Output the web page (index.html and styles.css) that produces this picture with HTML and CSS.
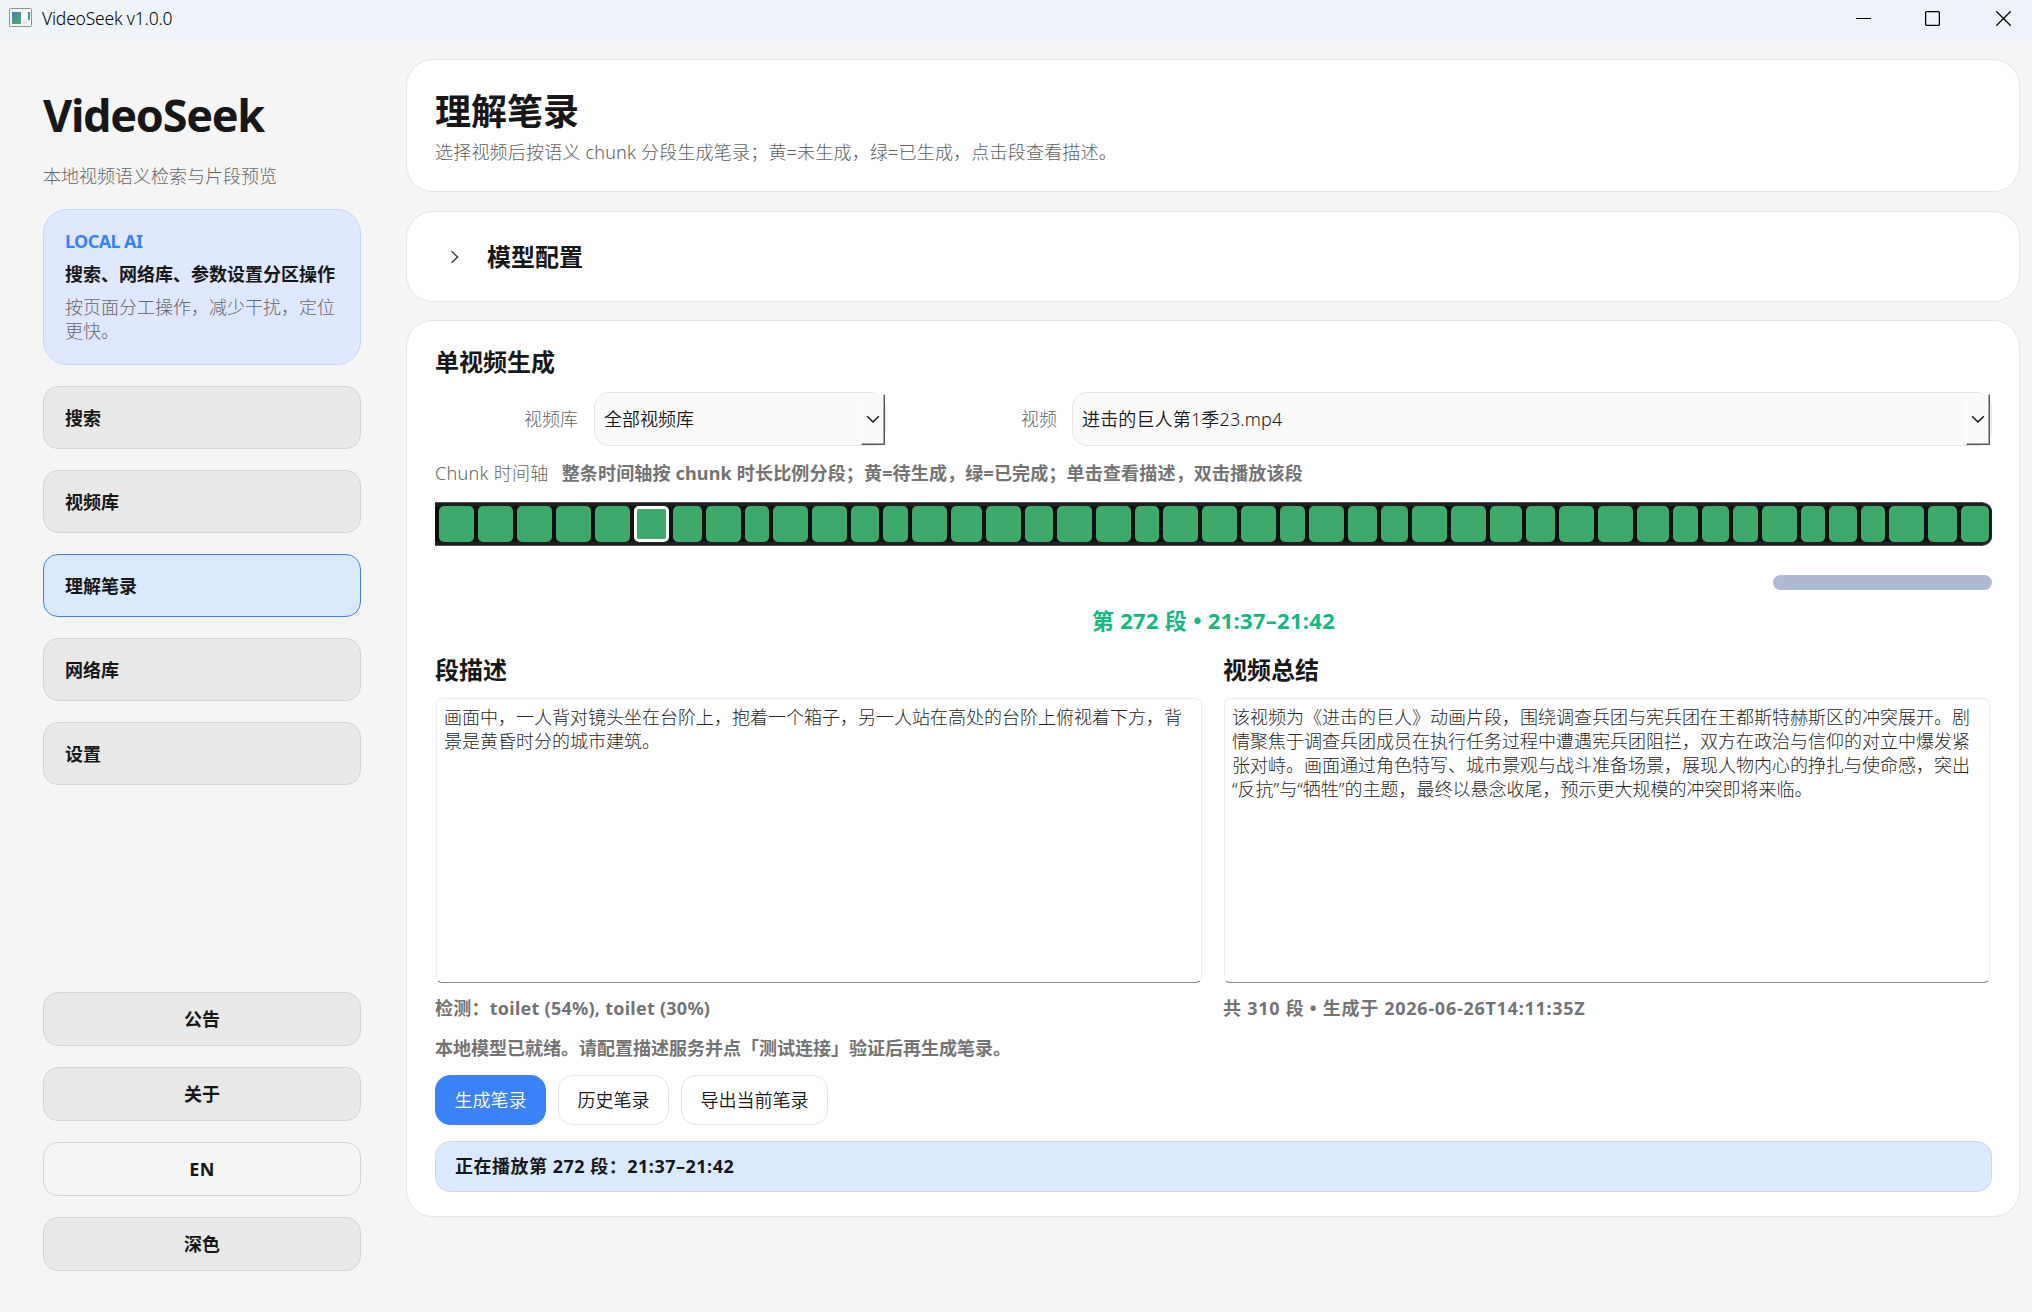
FILE: index.html
```html
<!DOCTYPE html>
<html lang="zh-CN">
<head>
<meta charset="utf-8">
<title>VideoSeek v1.0.0</title>
<link rel="stylesheet" href="styles.css">
</head>
<body>
<header class="titlebar">
  <svg class="app-icon" width="23" height="19" viewBox="0 0 23 19">
    <defs><linearGradient id="g" x1="0" y1="0" x2="0.6" y2="1"><stop offset="0" stop-color="#4a7fb0"/><stop offset="1" stop-color="#4fa878"/></linearGradient></defs>
    <rect x="0.5" y="0.5" width="22" height="18" rx="1" fill="#f4f4f4" stroke="#8f9296"/>
    <rect x="3" y="4" width="9" height="12" fill="url(#g)"/>
    <rect x="14" y="4" width="4" height="7" fill="#fff"/>
    <rect x="14" y="12" width="4" height="4" fill="#e6e6e6"/>
    <rect x="19" y="4" width="2" height="8" fill="url(#g)"/>
  </svg>
  <span class="app-title">VideoSeek v1.0.0</span>
  <div class="win-controls">
    <svg width="15" height="15" viewBox="0 0 15 15"><path d="M0 7.5H15" stroke="#000" fill="none"/></svg>
    <svg width="15" height="15" viewBox="0 0 15 15"><rect x="0.6" y="0.6" width="13.8" height="13.8" rx="1.2" stroke="#000" stroke-width="1.3" fill="none"/></svg>
    <svg width="15" height="15" viewBox="0 0 15 15"><path d="M0.3 0.3L14.7 14.7M14.7 0.3L0.3 14.7" stroke="#000" stroke-width="1.3" fill="none"/></svg>
  </div>
</header>
<div class="layout">
  <aside class="sidebar">
    <h1 class="brand">VideoSeek</h1>
    <p class="tagline">本地视频语义检索与片段预览</p>
    <section class="hero">
      <div class="hero-tag">LOCAL AI</div>
      <div class="hero-title">搜索、网络库、参数设置分区操作</div>
      <div class="hero-text">按页面分工操作，减少干扰，定位<br>更快。</div>
    </section>
    <nav class="nav">
      <button class="nav-item">搜索</button>
      <button class="nav-item">视频库</button>
      <button class="nav-item active">理解笔录</button>
      <button class="nav-item">网络库</button>
      <button class="nav-item">设置</button>
    </nav>
    <div class="side-actions">
      <button class="side-btn">公告</button>
      <button class="side-btn">关于</button>
      <button class="side-btn plain">EN</button>
      <button class="side-btn">深色</button>
    </div>
  </aside>
  <main class="main">
    <section class="card page-head">
      <h2 class="page-title">理解笔录</h2>
      <p class="page-sub">选择视频后按语义 chunk 分段生成笔录；黄=未生成，绿=已生成，点击段查看描述。</p>
    </section>
    <section class="card config">
      <svg width="10" height="14" viewBox="0 0 10 14"><path d="M1.5 1.2L7.6 7L1.5 12.8" stroke="#333" stroke-width="1.3" fill="none"/></svg>
      <h3 class="heading">模型配置</h3>
    </section>
    <section class="card single">
      <h3 class="heading">单视频生成</h3>
      <div class="form-row">
        <label class="label library-label">视频库</label>
        <div class="select library-select"><span>全部视频库</span>
          <i class="drop"><svg width="14" height="9" viewBox="0 0 14 9"><path d="M1.2 1.2L7 7L12.8 1.2" stroke="#111" stroke-width="1.4" fill="none"/></svg></i></div>
        <label class="label video-label">视频</label>
        <div class="select video-select"><span>进击的巨人第1季23.mp4</span>
          <i class="drop"><svg width="14" height="9" viewBox="0 0 14 9"><path d="M1.2 1.2L7 7L12.8 1.2" stroke="#111" stroke-width="1.4" fill="none"/></svg></i></div>
      </div>
      <div class="hint-row"><span class="label axis-label">Chunk 时间轴</span><span class="hint">整条时间轴按 chunk 时长比例分段；黄=待生成，绿=已完成；单击查看描述，双击播放该段</span></div>
      <div class="timeline">
        <i style="width:35px"></i><i style="width:35px"></i><i style="width:35px"></i><i style="width:35px"></i><i style="width:35px"></i><i class="selected" style="width:35px"></i><i style="width:29px"></i><i style="width:35px"></i><i style="width:24px"></i><i style="width:35px"></i><i style="width:35px"></i><i style="width:28px"></i><i style="width:25px"></i><i style="width:35px"></i><i style="width:31px"></i><i style="width:35px"></i><i style="width:28px"></i><i style="width:35px"></i><i style="width:35px"></i><i style="width:24px"></i><i style="width:35px"></i><i style="width:35px"></i><i style="width:35px"></i><i style="width:25px"></i><i style="width:35px"></i><i style="width:29px"></i><i style="width:27px"></i><i style="width:35px"></i><i style="width:35px"></i><i style="width:32px"></i><i style="width:29px"></i><i style="width:35px"></i><i style="width:35px"></i><i style="width:32px"></i><i style="width:25px"></i><i style="width:27px"></i><i style="width:25px"></i><i style="width:35px"></i><i style="width:24px"></i><i style="width:28px"></i><i style="width:24px"></i><i style="width:35px"></i><i style="width:29px"></i><i style="width:28px"></i>
      </div>
      <div class="scroll-thumb"></div>
      <div class="segment">第 272 段 • 21:37–21:42</div>
      <div class="columns">
        <div class="column">
          <h3 class="heading">段描述</h3>
          <div class="textbox">画面中，一人背对镜头坐在台阶上，抱着一个箱子，另一人站在高处的台阶上俯视着下方，背<br>景是黄昏时分的城市建筑。</div>
          <div class="meta detect">检测：toilet (54%), toilet (30%)</div>
        </div>
        <div class="column">
          <h3 class="heading">视频总结</h3>
          <div class="textbox">该视频为《进击的巨人》动画片段，围绕调查兵团与宪兵团在王都斯特赫斯区的冲突展开。剧<br>情聚焦于调查兵团成员在执行任务过程中遭遇宪兵团阻拦，双方在政治与信仰的对立中爆发紧<br>张对峙。画面通过角色特写、城市景观与战斗准备场景，展现人物内心的挣扎与使命感，突出<br>“反抗”与“牺牲”的主题，最终以悬念收尾，预示更大规模的冲突即将来临。</div>
          <div class="meta total">共 310 段 • 生成于 2026-06-26T14:11:35Z</div>
        </div>
      </div>
      <div class="meta status">本地模型已就绪。请配置描述服务并点「测试连接」验证后再生成笔录。</div>
      <div class="buttons">
        <button class="btn primary">生成笔录</button>
        <button class="btn">历史笔录</button>
        <button class="btn">导出当前笔录</button>
      </div>
      <div class="info">正在播放第 272 段：21:37–21:42</div>
    </section>
  </main>
</div>
</body>
</html>
```
FILE: styles.css
```css
* { box-sizing: border-box; margin: 0; padding: 0; }
body {
  width: 2032px; height: 1312px; overflow: hidden;
  display: flex; flex-direction: column;
  background: #f5f5f5; color: #171717;
  font: 300 18px/24px "Noto Sans", "Noto Sans CJK SC", sans-serif;
  white-space: nowrap;
}
button { font: inherit; color: inherit; }
.titlebar {
  height: 41px; flex: none; display: flex; align-items: flex-start;
  padding: 0 21px 0 9px;
  background: linear-gradient(90deg, #eef4f8, #eff3fb 25%, #eff3fb 70%, #edf3f8);
}
.app-icon { margin-top: 8px; }
.app-title { margin: 6px 0 0 10px; font-size: 17.5px; font-weight: 350; letter-spacing: -0.2px; color: #000; }
.win-controls { margin: 11px 0 0 auto; display: flex; gap: 56px; }
.win-controls svg:first-child { margin-right: -2px; }
.layout { flex: 1; display: flex; }
.sidebar { width: 406px; padding: 40px 45px 41px 43px; display: flex; flex-direction: column; }
.brand { font-size: 45px; line-height: 68px; font-weight: 700; letter-spacing: -1.3px; }
.tagline { margin-top: 15px; color: #666; }
.hero {
  margin-top: 21px; height: 156px; padding: 19px 21px;
  border: 1px solid #c4d6fd; border-radius: 24px; background: #dfe8ff;
}
.hero-tag { color: #3b82f6; font-weight: 700; letter-spacing: -0.6px; }
.hero-title { margin-top: 9px; font-weight: 700; }
.hero-text { margin-top: 9px; color: #666; }
.nav { margin-top: 21px; display: flex; flex-direction: column; gap: 21px; }
.nav-item {
  height: 63px; padding: 0 21px; text-align: left; font-weight: 700;
  border: 1px solid #d4d4d4; border-radius: 15px; background: #e8e8e8;
}
.nav-item.active { background: #dbe9fe; border-color: #3b82f6; }
.side-actions { margin-top: auto; display: flex; flex-direction: column; gap: 21px; }
.side-btn {
  height: 54px; font-weight: 700;
  border: 1px solid #d4d4d4; border-radius: 15px; background: #e8e8e8;
}
.side-btn.plain { background: #f5f5f5; letter-spacing: 0.4px; }
.main { width: 1614px; padding-top: 18px; }
.card { border: 1px solid #e5e5e5; border-radius: 27px; background: #fff; }
.page-head { height: 133px; padding: 28px 27px 28px 28px; }
.page-title { font-size: 36px; line-height: 48px; font-weight: 700; }
.page-sub { margin-top: 4px; color: #606060; letter-spacing: 0.2px; }
.config { height: 91px; margin-top: 19px; padding-left: 43px; display: flex; align-items: center; gap: 27px; }
.heading { font-size: 24px; line-height: 30px; font-weight: 700; }
.single { height: 897px; margin-top: 18px; padding: 26px 27px 24px 28px; }
.form-row { margin-top: 15px; display: flex; align-items: center; }
.label { color: #666; }
.library-label { width: 143px; margin-right: 16px; text-align: right; }
.video-label { width: 171px; margin-right: 15px; text-align: right; }
.axis-label { letter-spacing: 0.3px; }
.select {
  height: 54px; padding-left: 9px; display: flex; align-items: center; justify-content: space-between;
  border: 1px solid #e5e5e5; border-radius: 15px; background: #fafafa; font-weight: 350;
}
.library-select { width: 292px; }
.video-select { flex: 1; letter-spacing: 0.15px; }
.drop {
  width: 24px; height: 51px; display: flex; align-items: center; justify-content: center;
  background: #fafafa; border: 1px solid; border-color: #fff #555 #555 #fff;
  box-shadow: inset -1px -1px #aaa;
}
.video-select .drop { margin-right: 1px; }
.hint-row { margin-top: 15px; display: flex; gap: 13px; }
.hint { color: #737373; font-weight: 700; letter-spacing: 0.17px; }
.timeline {
  height: 44px; margin-top: 17px; padding: 3px 0 3px 4px; display: flex; gap: 4px;
  background: linear-gradient(#1f1f1f 0 3px, #0f0f0f 4px 38px, #1f1f1f 39px);
  border: 1px solid #555; border-width: 1px 0; border-radius: 0 10px 10px 0;
  box-shadow: inset -2px 0 #1f1f1f;
}
.timeline i { flex: none; height: 36px; border-radius: 5px; background: #3da96b; }
.timeline .selected { border: 3px solid #fff; }
.scroll-thumb { width: 219px; height: 15px; margin: 29px 0 0 auto; border-radius: 7.5px; background: #adbad2; }
.segment { margin-top: 16px; line-height: 29px; font-size: 22px; font-weight: 700; letter-spacing: 0.3px; text-align: center; color: #14b881; }
.columns { margin-top: 20px; display: flex; gap: 20px; }
.column { width: 768px; }
.textbox {
  height: 285px; margin: 13px 1px 0; padding: 6px 7px;
  border: 1px solid #ececec; border-bottom-color: #858585; border-radius: 6px; color: #262626;
}
.meta { color: #737373; font-weight: 700; }
.detect, .total { margin-top: 13px; }
.detect { letter-spacing: 0.25px; }
.total { letter-spacing: 0.73px; }
.status { margin-top: 16px; }
.buttons { margin-top: 15px; display: flex; gap: 12px; }
.btn { height: 50px; padding: 0 18.5px; border: 1px solid #e5e5e5; border-radius: 15px; background: #fff; font-weight: 350; }
.btn.primary { background: #3b82f6; border-color: #3b82f6; color: #fff; }
.info {
  height: 51px; margin-top: 16px; padding-left: 19px; line-height: 49px; font-weight: 700; letter-spacing: 0.5px;
  border: 1px solid #d4d4d4; border-radius: 15px; background: #dbe9fe;
}
```
